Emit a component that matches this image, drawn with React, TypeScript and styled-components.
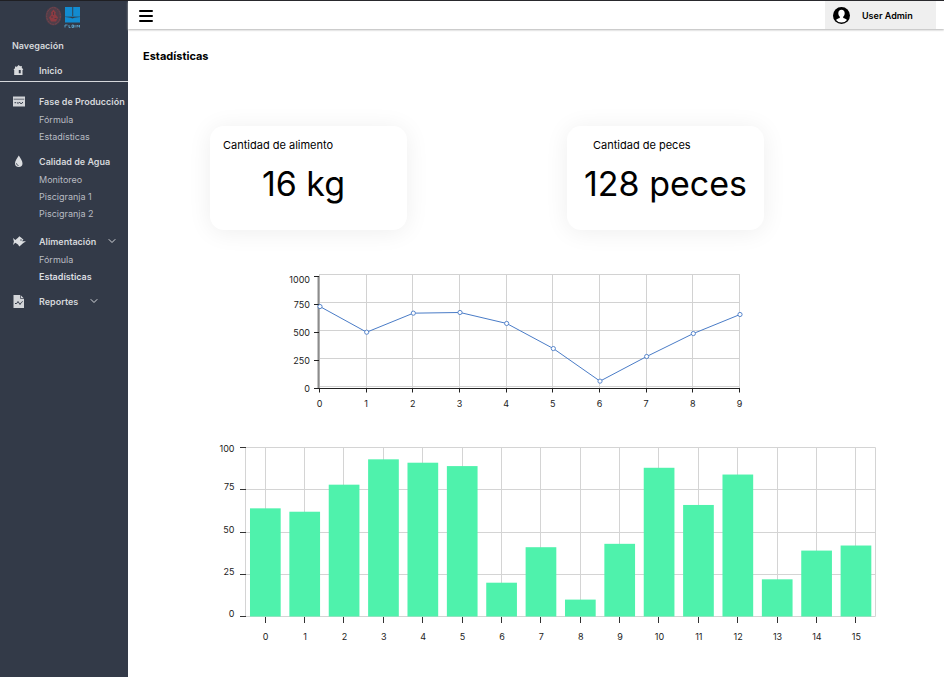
import React from 'react';
import styled, { createGlobalStyle, css } from 'styled-components';
import { ChevronDown } from 'lucide-react';

const GlobalStyle = createGlobalStyle`
  *, *::before, *::after { box-sizing: border-box; }
  body {
    margin: 0;
    background: #fff;
    color: #000;
    font-family: Inter, "Liberation Sans", sans-serif;
    font-size: 9px;
  }
  a { color: inherit; text-decoration: none; }
  button { font: inherit; color: inherit; background: none; border: 0; padding: 0; cursor: pointer; }
  svg { display: block; }
`;

const Page = styled.div`
  display: grid;
  grid-template-columns: 128px 1fr;
  min-height: 100vh;
  border-top: 1px solid #1f1f23;
`;

const Sidebar = styled.aside`
  background: #333a48;
  color: #d5d7db;
`;

const LogoRow = styled.div`
  display: flex;
  justify-content: center;
  padding: 4px 2px 0 0;
  height: 36px;
`;

const NavTitle = styled.h2`
  margin: 0;
  padding-left: 12px;
  font-size: 9px;
  line-height: 18px;
  font-weight: 600;
`;

const Nav = styled.nav`
  display: flex;
  flex-direction: column;
`;

const HomeRow = styled.div`
  padding: 6px 0 2px;
  border-bottom: 1px solid #d5d7db;
`;

const Groups = styled.div`
  display: flex;
  flex-direction: column;
  gap: 7px;
  padding-top: 10px;
`;

const Group = styled.div<{ $spaced?: boolean }>`
  margin-top: ${p => (p.$spaced ? 3 : 0)}px;
`;

const headStyle = css`
  display: grid;
  grid-template-columns: 16px auto auto;
  justify-content: start;
  align-items: center;
  column-gap: 10px;
  padding-left: 13px;
  height: 18px;
  font-weight: 600;
  white-space: nowrap;
`;

const HeadLink = styled.a`${headStyle}`;
const HeadButton = styled.button`
  && { ${headStyle} }
`;

const SubList = styled.ul`
  list-style: none;
  margin: 1px 0 0;
  padding: 0 0 0 39px;
`;

const SubLink = styled.a<{ $active?: boolean }>`
  display: block;
  line-height: 17px;
  color: ${p => (p.$active ? '#dcdee1' : '#b9bcc3')};
  font-weight: ${p => (p.$active ? 600 : 400)};
`;

const Content = styled.div`
  min-width: 0;
`;

const TopBar = styled.header`
  display: flex;
  align-items: stretch;
  justify-content: space-between;
  height: 28px;
  padding: 0 8px 0 11px;
  background: #fff;
  box-shadow: 0 1px 2px #b4b4b4;
`;

const MenuButton = styled.button`
  display: flex;
  align-items: center;
`;

const UserButton = styled.button`
  && {
    display: flex;
    align-items: center;
    gap: 12px;
    width: 111px;
    padding-left: 8px;
    background: #efefef;
    font-weight: 600;
  }
`;

const Main = styled.main`
  padding: 18px 0 0;
`;

const PageTitle = styled.h1`
  margin: 0 0 0 15px;
  font-size: 11px;
  line-height: 18px;
  font-weight: 700;
`;

const Cards = styled.section`
  display: flex;
  justify-content: space-between;
  gap: 24px;
  padding: 61px 180px 0 82px;
`;

const Card = styled.article<{ $inset: number }>`
  width: 197px;
  height: 104px;
  padding-top: 10px;
  border-radius: 14px;
  background: #fff;
  box-shadow: 0 2px 24px rgba(0, 0, 0, 0.07);

  h3 {
    margin: 0 0 0 ${p => p.$inset}px;
    font-size: 11px;
    line-height: 18px;
    font-weight: 400;
  }
`;

const CardValue = styled.p<{ $shift?: number }>`
  margin: 8px 0 0;
  padding-right: ${p => p.$shift || 0}px;
  font-size: 34px;
  line-height: 44px;
  text-align: center;
  white-space: nowrap;
`;

const ChartBox = styled.figure<{ $max: number; $left: number; $top: number }>`
  margin: ${p => p.$top}px 0 0 ${p => p.$left}px;
  max-width: ${p => p.$max}px;

  svg { width: 100%; height: auto; }
  text { font-size: 9px; fill: #222; }
`;

function Logo() {
  return (
    <svg width="36" height="24" viewBox="0 0 36 24" role="img" aria-label="Logo">
      <ellipse cx="8.5" cy="11" rx="8" ry="9.6" fill="#513e49" />
      <ellipse cx="8.5" cy="11" rx="6.8" ry="8.4" fill="none" stroke="#7b434c" strokeWidth="1" strokeDasharray="2 .8" />
      <path d="M8.5 4.500l2.500 3-.8 1.500 2.800 3.500-2 4h-5l-2-4 2.500-3-.5-2z" fill="#8c3b42" />
      <path d="M8.500 7v3M6 12h2M9.500 13.500h2" stroke="#4a3a45" strokeWidth=".9" />
      <path d="M20 2h7.300v9H20zM28.200 2H35v9h-6.800zM20 12c3 .2 5 .4 7.500 1.500 2.500-1.100 4.500-1.300 7.500-1.500v5.500H20z" fill="#128bd0" />
      <path d="M20 11.500h15" stroke="#1c6f9f" strokeWidth="1" />
      <path d="M20 20h2.500M20 20v2.500M24 20v2.500h1.500M27 20v2.500h1.500V20zM30 20v2.500M32 22.500V20l1.200 1.500L34.500 20v2.500" stroke="#5ba5cd" strokeWidth=".9" fill="none" />
    </svg>
  );
}

const HomeIcon = () => (
  <svg width="13" height="13" viewBox="0 0 13 13" aria-hidden="true">
    <path d="M.500 5.500 2 4.300V2.500h1.500v.7L5.500 1l2 1.500V2h1.300v1.700L10.300 5.500 9.500 6v5H1.200V6z" fill="#d8dadd" />
    <path d="M5.800 6h1.900v3.300H5.800z" fill="#333a48" />
  </svg>
);

const PanelIcon = () => (
  <svg width="13" height="13" viewBox="0 0 13 13" aria-hidden="true">
    <path d="M0 1.500h12v10H0z" fill="#d3d5d9" />
    <path d="M.7 4.200h10.600" stroke="#333a48" strokeWidth=".7" />
    <path d="M1.500 7.700h1.700M4 7.500l1.200 1L6.500 7l1 1.500h1.300L9.800 7" stroke="#333a48" fill="none" />
  </svg>
);

const DropIcon = () => (
  <svg width="13" height="13" viewBox="0 0 13 13" aria-hidden="true">
    <path d="M5.800.6C7 3 9.500 5.600 9.500 8.300a3.750 3.750 0 0 1-7.500 0C2 5.600 4.600 3 5.800.6z" fill="#dcdee1" />
    <path d="M3.500 8.300c.1 1.300.9 2 2 2.200" stroke="#333a48" strokeWidth=".9" fill="none" />
  </svg>
);

const FishIcon = () => (
  <svg width="13" height="13" viewBox="0 0 13 13" overflow="visible" aria-hidden="true">
    <path d="M0 3l2.300 2L5 2.800 6.300 1.200l2 1.600 2.200 2-1.700 1.500h4.200l-3 2-2.200 1.900-1.500 1.300L5 9.600 2.300 7.800 0 10l.9-3.500z" fill="#dcdee1" />
    <circle cx="8" cy="5" r=".7" fill="#333a48" />
  </svg>
);

const ReportIcon = () => (
  <svg width="13" height="13" viewBox="0 0 13 13" aria-hidden="true">
    <path d="M.5 0H7.500L11 3.500V13H.5z" fill="#d3d5d9" />
    <path d="M7.500 0v3.500H11" stroke="#333a48" strokeWidth=".7" fill="none" />
    <path d="M2 8.500h1.700L5 6.500l2 3 1.300-2 1.400-1" stroke="#333a48" fill="none" />
  </svg>
);

const MenuIcon = () => (
  <svg width="14" height="14" viewBox="0 0 14 14" aria-hidden="true">
    <path d="M1 3h12M1 8h12M1 13h12" stroke="#000" strokeWidth="2" strokeLinecap="round" />
  </svg>
);

const AvatarIcon = () => (
  <svg width="17" height="17" viewBox="0 0 17 17" aria-hidden="true">
    <circle cx="8.500" cy="8.500" r="8.500" fill="#000" />
    <path d="M8.500 2.800c-2 0-3.200 1.500-3.200 3.500 0 1.500.6 2.800 1.500 3.500v1.300c-1.300.5-2.800.9-3.800 1.800a7 7 0 0 0 11 0c-1-.9-2.500-1.300-3.800-1.800V9.800c.9-.7 1.500-2 1.500-3.500 0-2-1.200-3.500-3.200-3.500z" fill="#fff" />
  </svg>
);

const groups = [
  { label: 'Fase de Producción', icon: <PanelIcon />, items: ['Fórmula', 'Estadísticas'] },
  { label: 'Calidad de Agua', icon: <DropIcon />, items: ['Monitoreo', 'Piscigranja 1', 'Piscigranja 2'] },
  { label: 'Alimentación', icon: <FishIcon />, items: ['Fórmula', 'Estadísticas'], toggle: true, active: 1, spaced: true },
  { label: 'Reportes', icon: <ReportIcon />, items: [], toggle: true },
];

const lineValues = [729, 500, 670, 676, 578, 354, 63, 283, 488, 658];
const barValues = [64, 62, 78, 93, 91, 89, 20, 41, 10, 43, 88, 66, 84, 22, 39, 42];

function LineChart() {
  const left = 35.5;
  const right = 455.5;
  const base = 120.5;
  const step = (right - left) / 9;
  const x = (i: number) => left + step * i;
  const y = (v: number) => base - v * 0.112;
  return (
    <svg viewBox="0 0 464 144" role="img" aria-label="Alimento por periodo">
      <g stroke="#d2d2d2" fill="none">
        {[6.5, 34.5, 62.5, 90.5, 118.5].map(v => <path key={v} d={`M${left} ${v}H${right}`} />)}
        {lineValues.map((_, i) => <path key={i} d={`M${Math.floor(x(i)) + 0.5} 6V120`} />)}
      </g>
      <path d="M34.500 8V120" stroke="#8c8c8c" strokeWidth="2" />
      <g stroke="#222">
        <path d={`M31 ${base}H456`} />
        {[0, 250, 500, 750, 1000].map(v => <path key={v} d={`M30 ${y(v)}h5`} />)}
        {lineValues.map((_, i) => <path key={i} d={`M${Math.floor(x(i)) + 0.5} ${base}v4`} />)}
      </g>
      {[0, 250, 500, 750, 1000].map(v => (
        <text key={v} x="26" y={y(v) + (v === 1000 ? 6 : 3.5)} textAnchor="end">{v}</text>
      ))}
      {lineValues.map((_, i) => <text key={i} x={x(i)} y="139" textAnchor="middle">{i}</text>)}
      <polyline points={lineValues.map((v, i) => `${x(i) + 0.5},${y(v) - 0.3}`).join(' ')} fill="none" stroke="#4a7cc7" />
      {lineValues.map((v, i) => (
        <circle key={i} cx={x(i) + 0.5} cy={y(v) - 0.3} r="2.100" fill="#fff" stroke="#4a7cc7" strokeWidth=".9" />
      ))}
    </svg>
  );
}

function BarChart() {
  const left = 30.5;
  const right = 660.5;
  const top = 7.5;
  const base = 176.500;
  const step = (right - left) / 16;
  const x = (i: number) => left + step * (i + 0.5);
  const y = (v: number) => base - ((base - top) * v) / 100;
  const ticks = [0, 25, 50, 75, 100];
  return (
    <svg viewBox="0 0 668 206" role="img" aria-label="Peces por periodo">
      <g stroke="#d4d4d4" fill="none">
        {ticks.map(v => <path key={v} d={`M${left} ${Math.floor(y(v)) + 0.5}H${right}`} />)}
        {barValues.map((_, i) => <path key={i} d={`M${Math.floor(x(i)) + 0.5} ${top}V${base}`} />)}
        <path d={`M${left} ${top}V${base}M${right} ${top}V${base}`} />
      </g>
      {barValues.map((v, i) => (
        <rect key={i} x={x(i) - 15.200} y={y(v)} width="30.700" height={base - y(v)} fill="#4ff2ac" />
      ))}
      <g stroke="#333">
        {ticks.map(v => <path key={v} d={`M25 ${Math.floor(y(v)) + 0.5}h6`} />)}
        {barValues.map((_, i) => <path key={i} d={`M${Math.floor(x(i)) + 0.5} 177v6`} />)}
      </g>
      {ticks.map(v => (
        <text key={v} x="19.500" y={y(v) + (v === 100 ? 4.500 : 0.500)} textAnchor="end">{v}</text>
      ))}
      {barValues.map((_, i) => <text key={i} x={x(i) + 0.5} y="200" textAnchor="middle">{i}</text>)}
    </svg>
  );
}

export default function App() {
  return (
    <>
      <GlobalStyle />
      <Page>
        <Sidebar>
          <LogoRow><Logo /></LogoRow>
          <NavTitle>Navegación</NavTitle>
          <Nav aria-label="Navegación">
            <HomeRow>
              <HeadLink href="#inicio"><HomeIcon /><span>Inicio</span></HeadLink>
            </HomeRow>
            <Groups>
              {groups.map(g => (
                <Group key={g.label} $spaced={g.spaced}>
                  {g.toggle ? (
                    <HeadButton type="button" aria-expanded={g.items.length > 0}>
                      {g.icon}<span>{g.label}</span><ChevronDown size={12} strokeWidth={2} />
                    </HeadButton>
                  ) : (
                    <HeadLink href="#seccion">{g.icon}<span>{g.label}</span></HeadLink>
                  )}
                  {g.items.length > 0 && (
                    <SubList>
                      {g.items.map((item, i) => (
                        <li key={item}><SubLink href="#vista" $active={g.active === i}>{item}</SubLink></li>
                      ))}
                    </SubList>
                  )}
                </Group>
              ))}
            </Groups>
          </Nav>
        </Sidebar>
        <Content>
          <TopBar>
            <MenuButton type="button" aria-label="Menú"><MenuIcon /></MenuButton>
            <UserButton type="button"><AvatarIcon /><span>User Admin</span></UserButton>
          </TopBar>
          <Main>
            <PageTitle>Estadísticas</PageTitle>
            <Cards>
              <Card $inset={13}>
                <h3>Cantidad de alimento</h3>
                <CardValue $shift={10}>16 kg</CardValue>
              </Card>
              <Card $inset={26}>
                <h3>Cantidad de peces</h3>
                <CardValue>128 peces</CardValue>
              </Card>
            </Cards>
            <ChartBox $max={464} $left={156} $top={38}><LineChart /></ChartBox>
            <ChartBox $max={668} $left={87} $top={28}><BarChart /></ChartBox>
          </Main>
        </Content>
      </Page>
    </>
  );
}
